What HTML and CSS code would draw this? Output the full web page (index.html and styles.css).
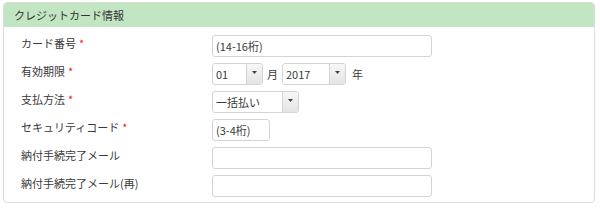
FILE: index.html
```html
<!DOCTYPE html>
<html lang="ja">
<head>
    <meta charset="UTF-8">
    <title>クレジットカード情報</title>
    <link rel="stylesheet" href="styles.css">
</head>
<body>

    <div class="panel">
        <div class="panel-head">クレジットカード情報</div>

        <div class="panel-body">
            <div class="row">
                <div class="label">カード番号<span class="req">*</span></div>
                <div class="field"><input type="text" class="input wide" placeholder="(14-16桁)"></div>
            </div>

            <div class="row">
                <div class="label">有効期限<span class="req">*</span></div>
                <div class="field">
                    <div class="select month">
                        <span class="select-value">01</span>
                        <span class="select-btn"><svg width="5" height="3" viewBox="0 0 5 3"><path d="M0 0H5L2.5 3Z" fill="#444"/></svg></span>
                    </div>
                    <span class="unit">月</span>
                    <div class="select year">
                        <span class="select-value">2017</span>
                        <span class="select-btn"><svg width="5" height="3" viewBox="0 0 5 3"><path d="M0 0H5L2.5 3Z" fill="#444"/></svg></span>
                    </div>
                    <span class="unit">年</span>
                </div>
            </div>

            <div class="row">
                <div class="label">支払方法<span class="req">*</span></div>
                <div class="field">
                    <div class="select pay">
                        <span class="select-value">一括払い</span>
                        <span class="select-btn"><svg width="5" height="3" viewBox="0 0 5 3"><path d="M0 0H5L2.5 3Z" fill="#444"/></svg></span>
                    </div>
                </div>
            </div>

            <div class="row">
                <div class="label">セキュリティコード<span class="req">*</span></div>
                <div class="field"><input type="text" class="input short" placeholder="(3-4桁)"></div>
            </div>

            <div class="row">
                <div class="label">納付手続完了メール</div>
                <div class="field"><input type="text" class="input wide"></div>
            </div>

            <div class="row">
                <div class="label">納付手続完了メール(再)</div>
                <div class="field"><input type="text" class="input wide"></div>
            </div>
        </div>
    </div>

</body>
</html>
```

FILE: styles.css
```css
* {
    margin: 0;
    padding: 0;
    box-sizing: border-box;
}
body {
    background: #fff;
    color: #3a3a3a;
    font-family: "Noto Sans CJK JP", "Noto Sans", sans-serif;
    font-size: 11px;
}
.panel {
    margin: 2px 5px 0 3px;
    width: 592px;
    height: 201px;
    border: 1px solid #dcdcdc;
    border-radius: 4px;
    overflow: hidden;
}
.panel-head {
    height: 24px;
    line-height: 24px;
    padding-left: 10px;
    background: #c2e6c2;
    color: #333;
}
.panel-body {
    display: flex;
    flex-direction: column;
    gap: 6px;
    padding: 8px 0 0 17px;
}
.row {
    display: flex;
    align-items: flex-start;
}
.label {
    width: 191px;
    line-height: 16px;
    padding-top: 0;
}
.req {
    color: #e22;
    margin-left: 3px;
}
.field {
    display: flex;
    align-items: center;
}
.input {
    height: 22px;
    border: 1px solid #d4d4d4;
    border-radius: 3px;
    padding: 0 3px;
    font-family: inherit;
    font-size: 11px;
    color: #3a3a3a;
    background: #fff;
}
.input::placeholder {
    color: #3a3a3a;
}
.wide {
    width: 220px;
}
.short {
    width: 58px;
}
.select {
    display: inline-flex;
    height: 22px;
    border: 1px solid #d4d4d4;
    border-radius: 3px;
    overflow: hidden;
}
.select-value {
    flex: 1;
    line-height: 20px;
    padding-left: 3px;
}
.select-btn {
    width: 16px;
    display: flex;
    align-items: flex-start;
    justify-content: center;
    padding-top: 7px;
    border-left: 1px solid #d4d4d4;
    background: linear-gradient(#f7f7f7, #e4e4e4);
}
.month {
    width: 51px;
}
.year {
    width: 64px;
}
.pay {
    width: 87px;
}
.unit {
    margin: 0 4px 0 4px;
}
.year + .unit {
    margin-left: 6px;
}
```
